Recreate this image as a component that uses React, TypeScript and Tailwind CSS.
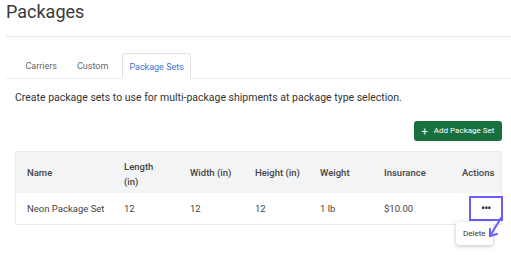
export default function App() {
  const cols = "grid grid-cols-[97px_66px_65px_65px_64px_78px_1fr] items-center";

  return (
    <main className="min-h-screen w-[511px] overflow-hidden bg-white pl-[6px] font-['Roboto',sans-serif] text-[#333]">
      <h1 className="pt-[1px] text-[18px] leading-[22px] text-[#3a3a3a]">Packages</h1>
      <div className="mt-[13px] h-px bg-[#e6e8e9]" />

      {/* Tabs */}
      <div className="mt-[16px] flex gap-[7px] border-b border-[#eceeef] pl-[13px]">
        {["Carriers", "Custom"].map((t) => (
          <div key={t} className="px-[6.5px] pb-[6px] pt-[8px] text-[9px] leading-[11px] text-[#666]">
            {t}
          </div>
        ))}
        <div className="-mb-px rounded-t-[3px] border border-b-white border-[#dfe3e6] bg-white px-[6.5px] pb-[5px] pt-[7px] text-[9px] leading-[12px] text-[#3a72d8]">
          Package Sets
        </div>
      </div>

      <div className="px-[9px]">
        <p className="mt-[12px] text-[10.5px] leading-[14px] text-[#333]">
          Create package sets to use for multi-package shipments at package type selection.
        </p>

        <div className="mt-[16px] flex justify-end">
          <button className="flex h-[20px] w-[88px] items-center justify-center gap-[6px] rounded-[3px] bg-[#19703f] text-[8px] font-normal text-white">
            <span className="text-[11px] leading-none">+</span>
            <span>Add Package Set</span>
          </button>
        </div>

        {/* Table */}
        <div className="mt-[10px] border border-[#e8eaec] text-[9.5px]">
          <div className={`${cols} h-[41px] bg-[#f3f4f5] pl-[11px] pt-[2px] font-medium text-[#444]`}>
            <div>Name</div>
            <div className="leading-[15px]">
              Length
              <br />
              (in)
            </div>
            <div>Width (in)</div>
            <div>Height (in)</div>
            <div>Weight</div>
            <div>Insurance</div>
            <div>Actions</div>
          </div>
          <div className={`${cols} h-[31px] pl-[11px] text-[#444]`}>
            <div className="pt-[2px]">Neon Package Set</div>
            <div className="pt-[2px]">12</div>
            <div className="pt-[2px]">12</div>
            <div className="pt-[2px]">12</div>
            <div className="pt-[2px]">1 lb</div>
            <div className="pt-[2px]">$10.00</div>
            <div className="relative flex h-full items-center">
              <div className="ml-[7px] flex h-[25px] w-[34px] items-center justify-center border-2 border-[#6a5cff]">
                <span className="text-[10px] font-bold leading-none tracking-[-0.5px] text-[#222]">•••</span>
              </div>
              {/* Delete popover */}
              <div className="absolute left-[-6px] top-[29px] flex h-[23px] w-[37px] items-center rounded-[3px] bg-white pl-[7px] text-[8px] text-[#333] shadow-[0_1px_4px_rgba(0,0,0,0.25)]">
                Delete
              </div>
              {/* Annotation arrow */}
              <svg
                className="absolute left-[25px] top-[24px]"
                width="20"
                height="22"
                viewBox="0 0 20 22"
                fill="none"
                stroke="#6a5cff"
                strokeWidth="2"
                strokeLinecap="round"
                strokeLinejoin="round"
              >
                <path d="M14 1 L3 19" />
                <path d="M3 19 L10 17" />
                <path d="M3 19 L3 12" />
              </svg>
            </div>
          </div>
        </div>
      </div>
    </main>
  );
}
